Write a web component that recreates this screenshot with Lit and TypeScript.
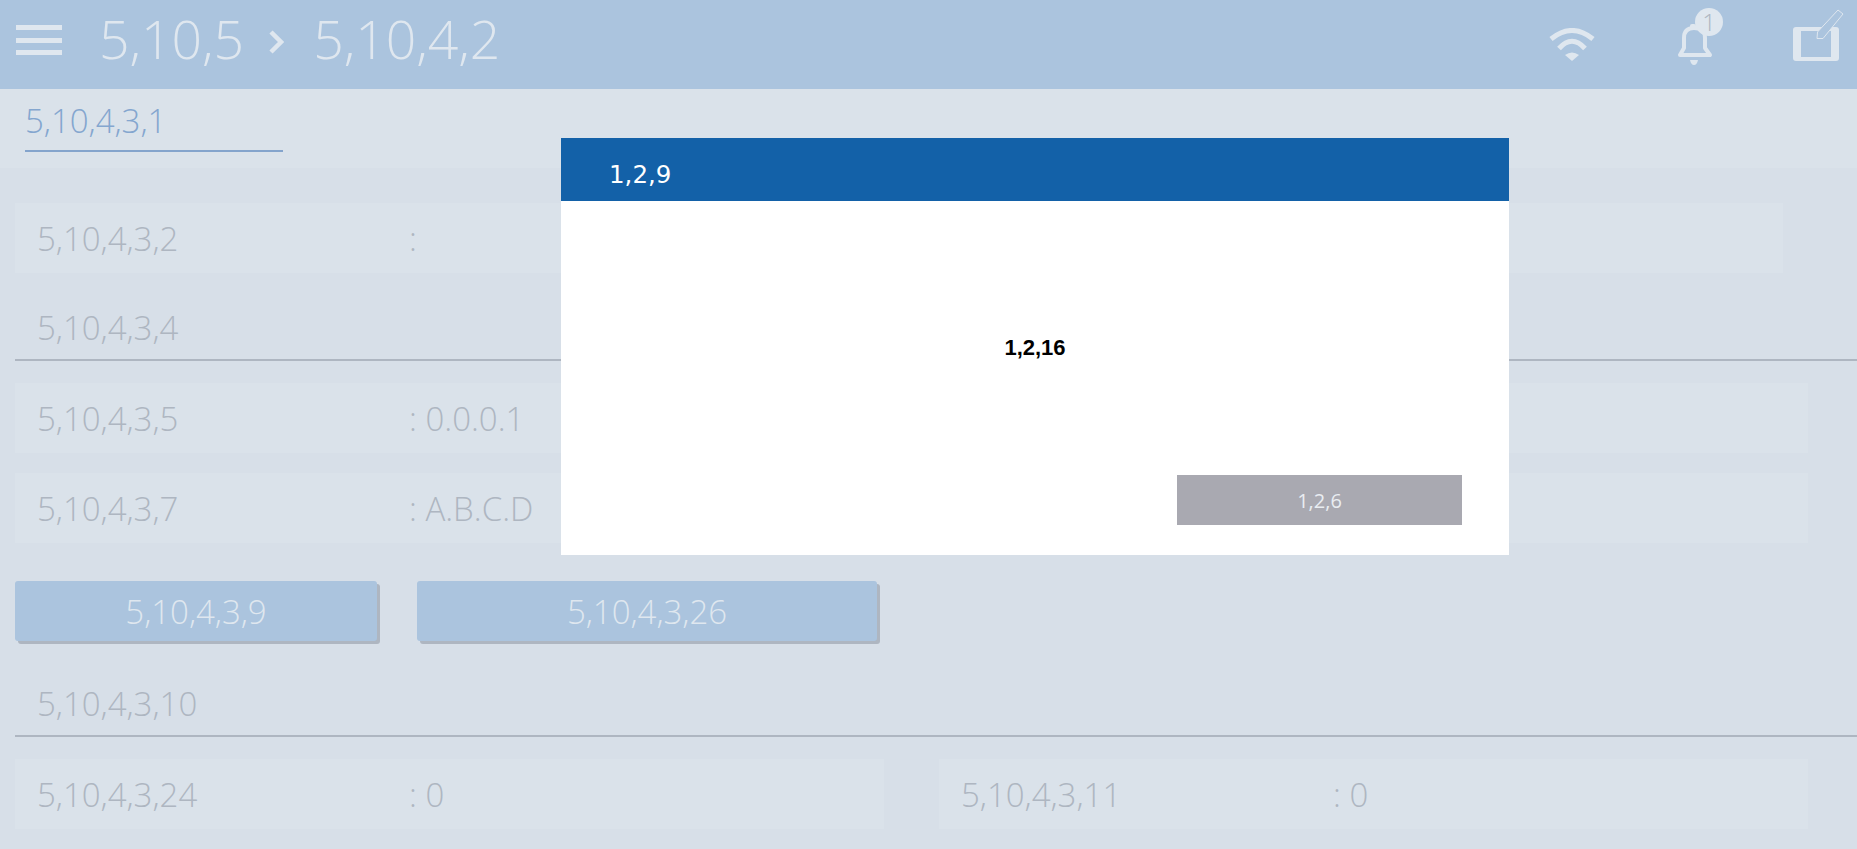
import { LitElement, html, css, svg } from "lit";
import { customElement } from "lit/decorators.js";

const hamburger = svg`<rect x="0" y="0" width="46" height="5" /><rect x="0" y="13" width="46" height="5" /><rect x="0" y="25" width="46" height="5" />`;

@customElement("app-root")
export class AppRoot extends LitElement {
  static styles = css`
    :host {
      display: block;
      position: relative;
      height: 849px;
      overflow: hidden;
      background: #d7dfe8;
      font-family: "Open Sans", "Noto Sans", sans-serif;
      color: #aeb6c1;
      font-size: 33px;
      font-weight: 300;
    }
    .topbar {
      display: flex;
      align-items: center;
      height: 89px;
      background: #abc4de;
      color: #dfe7ef;
      padding-left: 16px;
      box-sizing: border-box;
    }
    .menu { width: 46px; height: 30px; fill: #dfe7ef; margin-top: -9px; flex: none; }
    .crumbs {
      display: flex;
      align-items: center;
      margin-left: 37px;
      font-size: 53.5px;
      line-height: 80px;
      margin-top: -12px;
    }
    .chev { width: 15px; height: 24px; margin: 6px 29px 0 25px; fill: none; stroke: #dfe7ef; stroke-width: 4.5px; }
    .icons { display: flex; align-items: flex-start; margin-left: auto; height: 89px; }
    .wifi { width: 46px; height: 34px; margin-top: 28px; fill: none; stroke: #dfe7ef; }
    .bellbox { position: relative; width: 46px; height: 65px; margin-left: 82px; margin-top: 8px; }
    .bell { position: absolute; left: 0; top: 16px; width: 36px; height: 42px; }
    .badge {
      position: absolute;
      left: 18px;
      top: 0;
      width: 28px;
      height: 28px;
      border-radius: 50%;
      background: #dfe7ef;
      color: #aeb6c1;
      font-size: 24px;
      line-height: 28px;
      text-align: center;
    }
    .tablet { width: 52px; height: 54px; margin-left: 70px; margin-right: 12px; margin-top: 8px; }
    .tabs { height: 79px; background: #dae2ea; padding-left: 25px; box-sizing: border-box; }
    .tab {
      width: 258px;
      height: 63px;
      box-sizing: border-box;
      border-bottom: 2px solid #84a4cc;
      color: #84a6cf;
      line-height: 64px;
    }
    .content { padding-left: 15px; }
    .row {
      display: grid;
      grid-template-columns: 372px 1fr;
      align-items: center;
      height: 70px;
      padding: 2px 0 0 22px;
      box-sizing: border-box;
      background: #dae2ea;
      width: 1793px;
      line-height: 44px;
    }
    .first { width: 1768px; margin-top: 35px; }
    .gap22 { margin-top: 22px; }
    .gap20 { margin-top: 20px; }
    .section {
      display: flex;
      align-items: flex-end;
      height: 88px;
      box-sizing: border-box;
      border-bottom: 2px solid #aeb6c1;
      padding: 0 0 9px 22px;
      line-height: 44px;
    }
    .tall { height: 96px; padding-bottom: 9px; }
    .buttons { display: flex; gap: 40px; margin-top: 38px; }
    .btn {
      height: 60px;
      background: #abc4de;
      color: #dfe7ef;
      border-radius: 3px;
      box-shadow: 3px 3px 0 #aeb6c1;
      display: flex;
      align-items: center;
      justify-content: center;
    }
    .b1 { width: 362px; }
    .b2 { width: 460px; }
    .pair { display: flex; gap: 55px; margin-top: 22px; }
    .pair .row { width: 869px; }
    .modal {
      position: absolute;
      left: 561px;
      top: 138px;
      width: 948px;
      height: 417px;
      background: #fff;
      display: flex;
      flex-direction: column;
    }
    .m-head {
      height: 63px;
      background: #1361a8;
      color: #fff;
      font-family: "DejaVu Sans", sans-serif;
      font-weight: 400;
      font-size: 24.5px;
      line-height: 36px;
      padding: 19px 0 0 48px;
      box-sizing: border-box;
    }
    .m-body {
      margin-top: 133px;
      text-align: center;
      font-family: "Liberation Sans", Arial, sans-serif;
      font-weight: 700;
      font-size: 22px;
      line-height: 28px;
      color: #000;
    }
    .m-foot { display: flex; justify-content: flex-end; margin: 113px 47px 0 0; }
    .m-btn {
      width: 285px;
      height: 50px;
      background: #a9a9b1;
      color: #e9edf1;
      font-size: 20px;
      font-weight: 400;
      display: flex;
      align-items: center;
      justify-content: center;
    }
  `;

  private row(label: string, value: string, cls = "") {
    return html`<div class="row ${cls}"><span>${label}</span><span>${value}</span></div>`;
  }

  render() {
    return html`
      <header class="topbar">
        <svg class="menu" viewBox="0 0 46 30">${hamburger}</svg>
        <div class="crumbs">
          <span>5,10,5</span>
          <svg class="chev" viewBox="0 0 15 24"><path d="M2 2 L12 12 L2 22" /></svg>
          <span>5,10,4,2</span>
        </div>
        <div class="icons">
          <svg class="wifi" viewBox="0 0 46 34">
            <path d="M2 11 Q23 -6 44 11" stroke-width="5" />
            <path d="M10 20.5 Q23 6 36 20.5" stroke-width="5" />
            <path d="M16 27 Q23 22 30 27 L23 33 Z" fill="#dfe7ef" stroke="none" />
          </svg>
          <div class="bellbox">
            <svg class="bell" viewBox="0 0 36 42">
              <path d="M7 24 V14 C7 6 12 4 17 4 C23 4 28 6 28 14 V24 L33 31 H3 Z" fill="none" stroke="#dfe7ef" stroke-width="4" stroke-linejoin="round" />
              <path d="M13 36 H21 Q20 41 17 41 Q14 41 13 36 Z" fill="#dfe7ef" />
              <rect x="13" y="0" width="6" height="5" rx="2" fill="#dfe7ef" />
            </svg>
            <span class="badge">1</span>
          </div>
          <svg class="tablet" viewBox="0 0 52 54">
            <path fill="#dfe7ef" fill-rule="evenodd" d="M3 19 H43 Q46 19 46 22 V50 Q46 53 43 53 H3 Q0 53 0 50 V22 Q0 19 3 19 Z M8 23 V49 H38 V23 Z" />
            <path d="M24 30.5 L24.5 24 L45 2 L50 6 L30 30.5 Z" fill="#abc4de" stroke="#dfe7ef" stroke-width="1" />
          </svg>
        </div>
      </header>
      <div class="tabs"><div class="tab">5,10,4,3,1</div></div>
      <main class="content">
        ${this.row("5,10,4,3,2", ":", "first")}
        <div class="section">5,10,4,3,4</div>
        ${this.row("5,10,4,3,5", ": 0.0.0.1", "gap22")}
        ${this.row("5,10,4,3,7", ": A.B.C.D", "gap20")}
        <div class="buttons">
          <div class="btn b1">5,10,4,3,9</div>
          <div class="btn b2">5,10,4,3,26</div>
        </div>
        <div class="section tall">5,10,4,3,10</div>
        <div class="pair">
          ${this.row("5,10,4,3,24", ": 0")}
          ${this.row("5,10,4,3,11", ": 0")}
        </div>
      </main>
      <section class="modal">
        <div class="m-head">1,2,9</div>
        <div class="m-body">1,2,16</div>
        <div class="m-foot"><div class="m-btn">1,2,6</div></div>
      </section>
    `;
  }
}
